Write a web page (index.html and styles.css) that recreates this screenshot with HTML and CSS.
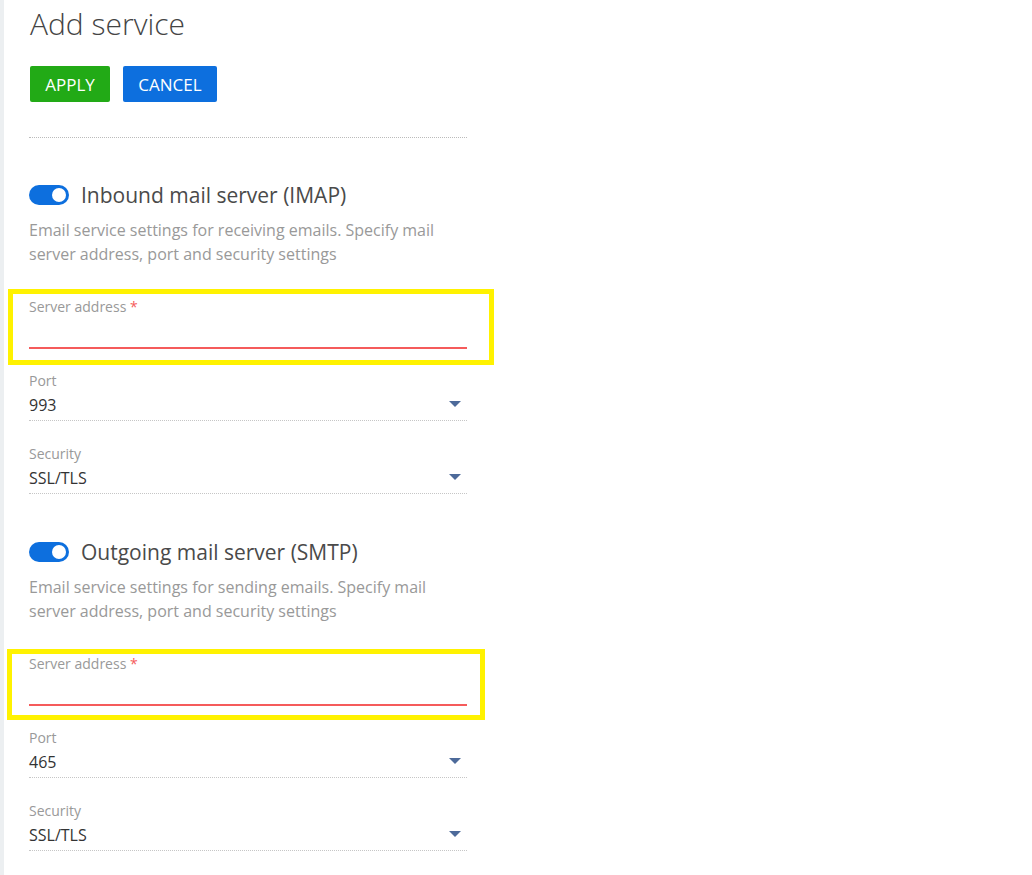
FILE: index.html
```html
<!DOCTYPE html>
<html lang="en">
  <head>
    <meta charset="UTF-8" />
    <meta name="viewport" content="width=device-width, initial-scale=1.0" />
    <title>Add service</title>
    <link rel="stylesheet" href="styles.css">
  </head>
  <body>
    <div class="page">
      <h1 class="page-title">Add service</h1>
      <div class="actions">
        <button type="button" class="btn btn-apply">APPLY</button>
        <button type="button" class="btn btn-cancel">CANCEL</button>
      </div>
      <div class="separator"></div>

      <!-- Inbound (IMAP) -->
      <section class="server">
        <div class="server-head">
          <span class="toggle on"><span class="knob"></span></span>
          <h2>Inbound mail server (IMAP)</h2>
        </div>
        <p class="server-desc">Email service settings for receiving emails. Specify mail server address, port and security settings</p>
        <div class="field field-required">
          <div class="highlight highlight-imap"></div>
          <label>Server address <span class="req">*</span></label>
          <div class="field-value"></div>
        </div>
        <div class="field">
          <label>Port</label>
          <div class="field-value">993<span class="caret"></span></div>
        </div>
        <div class="field">
          <label>Security</label>
          <div class="field-value">SSL/TLS<span class="caret"></span></div>
        </div>
      </section>

      <!-- Outgoing (SMTP) -->
      <section class="server">
        <div class="server-head">
          <span class="toggle on"><span class="knob"></span></span>
          <h2>Outgoing mail server (SMTP)</h2>
        </div>
        <p class="server-desc">Email service settings for sending emails. Specify mail server address, port and security settings</p>
        <div class="field field-required">
          <div class="highlight highlight-smtp"></div>
          <label>Server address <span class="req">*</span></label>
          <div class="field-value"></div>
        </div>
        <div class="field">
          <label>Port</label>
          <div class="field-value">465<span class="caret"></span></div>
        </div>
        <div class="field">
          <label>Security</label>
          <div class="field-value">SSL/TLS<span class="caret"></span></div>
        </div>
      </section>
    </div>
  </body>
</html>
```

FILE: styles.css
```css
body {
  font-family: "Open Sans", "Noto Sans", sans-serif;
  margin: 0;
  padding: 0;
  background-color: #fff;
  color: #444;
}

.page {
  border-left: 4px solid #eceff1;
  min-height: 875px;
  box-sizing: border-box;
  padding: 6px 0 0 25px;
  width: 467px;
}

.page-title {
  margin: 0;
  font-size: 30px;
  font-weight: 300;
  line-height: 36px;
  color: #444;
  padding-left: 1px;
}

.actions {
  display: flex;
  gap: 13px;
  margin-top: 24px;
  padding-left: 1px;
}

.btn {
  height: 36px;
  padding: 0;
  border: none;
  border-radius: 2px;
  color: #fff;
  font-family: inherit;
  font-size: 17px;
  cursor: pointer;
}

.btn-apply {
  background-color: #22aa16;
  width: 80px;
}

.btn-cancel {
  background-color: #0d6fde;
  width: 94px;
}

.separator {
  margin-top: 35px;
  border-top: 1px dotted #bbb;
}

.server {
  margin-top: 43px;
}

.server + .server {
  margin-top: 44px;
}

.server-head {
  display: flex;
  align-items: center;
  gap: 12px;
  height: 28px;
}

.server-head h2 {
  margin: 0;
  font-size: 21px;
  font-weight: 400;
  color: #4a4a4a;
  line-height: 28px;
}

.toggle {
  width: 40px;
  height: 20px;
  border-radius: 10px;
  background-color: #0d6fde;
  position: relative;
  flex-shrink: 0;
}

.toggle .knob {
  position: absolute;
  top: 3px;
  right: 3px;
  width: 14px;
  height: 14px;
  border-radius: 50%;
  background-color: #fff;
}

.server-desc {
  margin: 9px 0 0;
  font-size: 16px;
  line-height: 24px;
  color: #999;
}

.field {
  position: relative;
  margin-top: 23px;
  border-bottom: 1px dotted #c6c6c6;
}

.field label {
  display: block;
  font-size: 14px;
  line-height: 20px;
  color: #999;
}

.field-value {
  position: relative;
  font-size: 16px;
  line-height: 28px;
  height: 29px;
  color: #333;
}

.field-required {
  margin-top: 31px;
  border-bottom: 2px solid #f55b5b;
}

.field-required + .field {
  margin-top: 22px;
}

.field-required .field-value {
  height: 30px;
}

.req {
  color: #f55b5b;
}

.caret {
  position: absolute;
  right: 6px;
  top: 10px;
  width: 0;
  height: 0;
  border-left: 6px solid transparent;
  border-right: 6px solid transparent;
  border-top: 6px solid #4d6a9a;
}

/* yellow marker frame drawn over the address field */
.highlight {
  position: absolute;
  border: 5px solid #fff200;
  pointer-events: none;
}

.highlight-imap {
  top: -8px;
  left: -21px;
  right: -27px;
  bottom: -18px;
}

.highlight-smtp {
  top: -5px;
  left: -22px;
  right: -18px;
  bottom: -16px;
}
```
